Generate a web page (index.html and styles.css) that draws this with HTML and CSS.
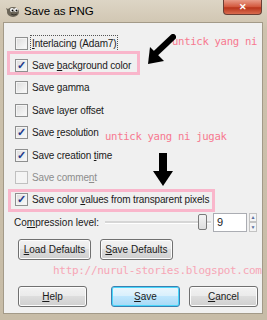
FILE: index.html
```html
<!DOCTYPE html>
<html>
<head>
<meta charset="utf-8">
<link rel="stylesheet" href="styles.css">
</head>
<body>
<div class="window">
  <div class="titlebar">
    <svg class="appicon" width="16" height="14" viewBox="0 0 16 14">
      <ellipse cx="9" cy="8" rx="6" ry="5" fill="#6b6558"/>
      <path d="M2 4 L6 6 L4 9 Z" fill="#6b6558"/>
      <circle cx="8" cy="6" r="2" fill="#fff"/>
      <circle cx="12" cy="6" r="2" fill="#fff"/>
      <circle cx="8.5" cy="6.5" r="1" fill="#000"/>
      <circle cx="12.5" cy="6.5" r="1" fill="#000"/>
      <path d="M7 10 Q10 12 13 10" stroke="#3a352c" stroke-width="1" fill="none"/>
    </svg>
    <span class="title">Save as PNG</span>
    <div class="close"><span>✕</span></div>
  </div>
  <div class="panel">
    <div class="row"><span class="cb"></span><span class="lbl focus"><u>I</u>nterlacing (Adam7)</span></div>
    <div class="row"><span class="cb on">✓</span><span class="lbl">Save <u>b</u>ackground color</span></div>
    <div class="row"><span class="cb"></span><span class="lbl">Save gamma</span></div>
    <div class="row"><span class="cb"></span><span class="lbl">Save layer offset</span></div>
    <div class="row"><span class="cb on">✓</span><span class="lbl">Save <u>r</u>esolution</span></div>
    <div class="row"><span class="cb on">✓</span><span class="lbl">Save creation <u>t</u>ime</span></div>
    <div class="row dis"><span class="cb off"></span><span class="lbl">Save comme<u>n</u>t</span></div>
    <div class="row"><span class="cb on">✓</span><span class="lbl">Save color <u>v</u>alues from transparent pixels</span></div>
    <div class="comp">
      <span class="clbl">Co<u>m</u>pression level:</span>
      <div class="slider"><div class="track"></div><div class="thumb"></div></div>
      <div class="spin"><span class="val">9</span><div class="arrows"><span>▲</span><span>▼</span></div></div>
    </div>
    <div class="defrow">
      <button class="btn wide"><u>L</u>oad Defaults</button>
      <button class="btn wide"><u>S</u>ave Defaults</button>
    </div>
    <div class="url">http://nurul-stories.blogspot.com</div>
    <div class="btnrow">
      <button class="btn"><u>H</u>elp</button>
      <button class="btn def"><u>S</u>ave</button>
      <button class="btn"><u>C</u>ancel</button>
    </div>

    <div class="hl hl1"></div>
    <div class="hl hl2"></div>
    <div class="note note1">untick yang ni</div>
    <div class="note note2">untick yang ni jugak</div>
    <svg class="arrow1" width="30" height="32" viewBox="0 0 30 32">
      <path d="M27 3 L9 20" stroke="#000" stroke-width="6" stroke-linecap="round"/>
      <path d="M2 30 L4 13 L18 27 Z" fill="#000"/>
    </svg>
    <svg class="arrow2" width="22" height="34" viewBox="0 0 22 34">
      <rect x="7" y="0" width="8" height="20" fill="#000"/>
      <path d="M1 18 L21 18 L11 33 Z" fill="#000"/>
    </svg>
  </div>
</div>
</body>
</html>
```
FILE: styles.css
```css
html, body { margin: 0; padding: 0; }
body {
  width: 267px; height: 320px; overflow: hidden;
  font-family: "Liberation Sans", Arial, sans-serif;
  font-size: 10px; color: #1a1a1a;
}
.window {
  width: 267px; height: 320px;
  background: linear-gradient(#ddd5c5, #cdc2ad 30px, #c7bca7);
  display: flex; flex-direction: column;
  box-sizing: border-box;
  padding: 0 4px 6px 3px;
}
.titlebar {
  height: 22px; display: flex; align-items: center;
  position: relative;
}
.appicon { margin-left: 1px; margin-right: 4px; }
.title { font-size: 11.5px; color: #000; }
.close {
  position: absolute; right: 1px; top: 0;
  width: 37px; height: 14px;
  border: 1px solid #6b3f36; border-top: none;
  border-radius: 0 0 4px 4px;
  background: linear-gradient(#e89b88, #d2563b 50%, #b8341b 55%, #d96c4f);
  display: flex; align-items: center; justify-content: center;
  color: #fff; font-size: 9px; font-weight: bold;
}
.panel {
  position: relative; flex: 1;
  background: #f0f0f0;
  border: 1px solid #a39a88;
  padding: 9px 0 0 11px;
}
.row { height: 22.4px; display: flex; align-items: center; white-space: nowrap; letter-spacing: -0.15px; }
.cb {
  width: 11px; height: 11px; border: 1px solid #8e8f8f;
  background: linear-gradient(135deg, #dcdcdc, #fbfbfb);
  box-shadow: inset 0 0 0 1px #f4f4f4;
  margin-right: 3px; flex: none;
  display: flex; align-items: center; justify-content: center;
  color: #233a8c; font-size: 11px; font-weight: bold; line-height: 1;
}
.cb.off { border-color: #c0c0c0; background: #f4f4f4; }
.lbl { padding: 1px 1px; }
.focus { outline: 1px dotted #555; outline-offset: 0; padding: 2px 1px; }
.dis { color: #8d8d8d; }
.comp {
  display: flex; align-items: center; height: 22px; margin-left: -1px;
  white-space: nowrap;
}
.clbl { width: 91px; }
.slider { position: relative; width: 106px; height: 18px; }
.track {
  position: absolute; left: 0; right: 0; top: 8px; height: 2px;
  background: #d6d6d6; border-bottom: 1px solid #fff;
}
.thumb {
  position: absolute; left: 93px; top: 1px; width: 7px; height: 14px;
  border: 1px solid #7a7a7a; border-radius: 2px;
  background: linear-gradient(#f4f4f4, #dedede);
}
.spin { display: flex; margin-left: 2px; height: 19px; }
.val {
  border: 1px solid #abadb3; background: #fff;
  padding-left: 3px; box-sizing: border-box; width: 34px;
  display: flex; align-items: center; font-size: 11px;
}
.arrows {
  display: flex; flex-direction: column; width: 8px; margin-left: 2px;
  font-size: 5px; color: #5a6fa0;
}
.arrows span {
  flex: 1; border: 1px solid #c3c3c3; background: #f4f4f4;
  display: flex; align-items: center; justify-content: center;
}
.defrow { display: flex; gap: 9px; margin-top: 6px; margin-left: 3px; }
.btn {
  font-family: inherit; font-size: 10px; color: #1a1a1a;
  height: 21px; width: 69px; padding: 0;
  border: 1px solid #707070; border-radius: 3px;
  background: linear-gradient(#f2f2f2, #ebebeb 45%, #dddddd 50%, #cfcfcf);
  box-shadow: inset 0 0 0 1px #fcfcfc;
  white-space: nowrap;
}
.btn.wide { width: 73px; }
.url {
  margin-left: 38px; margin-top: 4px; height: 20px;
  font-family: "DejaVu Sans Mono", monospace; font-size: 11px;
  color: #f7a6b6; letter-spacing: -0.3px; white-space: nowrap;
}
.btnrow { display: flex; margin-top: 2px; margin-left: 3px; }
.btnrow .btn:nth-child(2) { margin-left: 24px; }
.btnrow .btn:nth-child(3) { margin-left: 9px; }
.btn.def {
  border-color: #3c7fb1;
  box-shadow: inset 0 0 0 1px #48d7fb;
  background: linear-gradient(#eaf6fd, #d9f0fc 45%, #bee6fd 50%, #a7d9f5);
}
.hl { position: absolute; border: 3px solid #f9b6cb; }
.hl1 { left: 3px; top: 28px; width: 127px; height: 18px; }
.hl2 { left: 4px; top: 166px; width: 201px; height: 17px; }
.note {
  position: absolute; color: #f7788f; white-space: nowrap;
  font-family: "DejaVu Sans Mono", monospace; font-size: 10.6px;
  letter-spacing: -0.3px;
}
.note1 { left: 168px; top: 12px; }
.note2 { left: 101px; top: 107px; }
.arrow1 { position: absolute; left: 142px; top: 11px; }
.arrow2 { position: absolute; left: 148px; top: 130px; }
u { text-decoration: underline; text-underline-offset: 1px; }
```
